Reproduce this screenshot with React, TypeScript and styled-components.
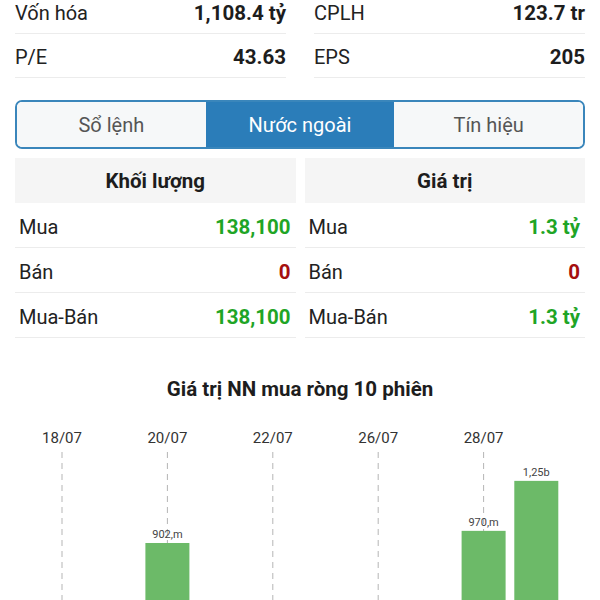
import React from 'react';
import styled, { createGlobalStyle } from 'styled-components';

const GlobalStyle = createGlobalStyle`
  html, body {
    margin: 0;
    padding: 0;
    background: #fff;
    overflow: hidden;
  }
  body {
    font-family: Roboto, "Noto Sans", "Liberation Sans", sans-serif;
    color: #222;
  }
`;

const Page = styled.div`
  padding: 0 15px;
  margin-top: -10px;
  width: 600px;
  box-sizing: border-box;
`;

const InfoGrid = styled.div`
  display: grid;
  grid-template-columns: 1fr 1fr;
  column-gap: 28px;
`;

const InfoRow = styled.div`
  display: flex;
  justify-content: space-between;
  align-items: center;
  height: 44px;
  padding-top: 2px;
  box-sizing: border-box;
  border-bottom: 1px solid #ececec;
  font-size: 20px;
`;

const Value = styled.span<{ $tone?: 'up' | 'down' }>`
  font-weight: 700;
  font-size: 20.5px;
  color: ${(p) => (p.$tone === 'up' ? '#1fa526' : p.$tone === 'down' ? '#a50f0f' : '#1d1d1d')};
`;

const Tabs = styled.div`
  display: grid;
  grid-template-columns: repeat(3, 1fr);
  margin-top: 22px;
  height: 49px;
  border: 2px solid #3a86bb;
  border-radius: 7px;
  overflow: hidden;
  box-sizing: border-box;
`;

const Tab = styled.div<{ $active?: boolean }>`
  display: flex;
  align-items: center;
  justify-content: center;
  font-size: 20px;
  background: ${(p) => (p.$active ? '#2b7db9' : '#f6f8f9')};
  color: ${(p) => (p.$active ? '#fff' : '#555')};
`;

const Tables = styled.div`
  display: grid;
  grid-template-columns: 1fr 1fr;
  column-gap: 9px;
  margin-top: 9px;
`;

const TableHead = styled.div`
  height: 45px;
  display: flex;
  align-items: center;
  justify-content: center;
  background: #f5f5f5;
  font-size: 20.5px;
  font-weight: 700;
  color: #1d1d1d;
`;

const TableRow = styled.div`
  display: flex;
  justify-content: space-between;
  align-items: center;
  height: 45px;
  box-sizing: border-box;
  padding: 3px 5px 0 4px;
  border-bottom: 1px solid #ececec;
  font-size: 20px;
`;

const ChartTitle = styled.div`
  margin-top: 39px;
  text-align: center;
  font-size: 20.5px;
  font-weight: 700;
  line-height: 24px;
  color: #1d1d1d;
`;

const ChartSvg = styled.svg`
  display: block;
  margin-top: 9px;
`;

type Row = { label: string; value: string; tone?: 'up' | 'down' };

const volume: Row[] = [
  { label: 'Mua', value: '138,100', tone: 'up' },
  { label: 'Bán', value: '0', tone: 'down' },
  { label: 'Mua-Bán', value: '138,100', tone: 'up' },
];

const amount: Row[] = [
  { label: 'Mua', value: '1.3 tỷ', tone: 'up' },
  { label: 'Bán', value: '0', tone: 'down' },
  { label: 'Mua-Bán', value: '1.3 tỷ', tone: 'up' },
];

// net foreign buy, in millions; 0 = no bar shown
const sessions: { date: string; value: number; label?: string }[] = [
  { date: '18/07', value: 0 },
  { date: '19/07', value: 0 },
  { date: '20/07', value: 902, label: '902,m' },
  { date: '21/07', value: 0 },
  { date: '22/07', value: 0 },
  { date: '25/07', value: 0 },
  { date: '26/07', value: 0 },
  { date: '27/07', value: 0 },
  { date: '28/07', value: 970, label: '970,m' },
  { date: '29/07', value: 1250, label: '1,25b' },
];

const SLOT = 52.7;
const FIRST = 47;
const BASE = 294;
const SCALE = 0.1785;

const Chart: React.FC = () => (
  <ChartSvg width={570} height={200} viewBox="0 0 570 200">
    {sessions.map((s, i) =>
      i % 2 === 0 ? (
        <g key={s.date}>
          <text
            x={FIRST + i * SLOT}
            y={33}
            textAnchor="middle"
            fontSize={15}
            fill="#333"
            fontFamily="Roboto, sans-serif"
          >
            {s.date}
          </text>
          <line
            x1={FIRST + i * SLOT}
            x2={FIRST + i * SLOT}
            y1={42}
            y2={200}
            stroke="#b5b5b5"
            strokeWidth={1}
            strokeDasharray="6 5"
          />
        </g>
      ) : null
    )}
    {sessions.map((s, i) => {
      if (!s.value) return null;
      const h = s.value * SCALE;
      const cx = FIRST + i * SLOT;
      return (
        <g key={s.date + 'b'}>
          <rect x={cx - 22} y={BASE - h} width={44} height={h} fill="#6cba68" />
          <text
            x={cx}
            y={BASE - h - 5}
            textAnchor="middle"
            fontSize={11}
            fill="#444"
            fontFamily="Roboto, sans-serif"
          >
            {s.label}
          </text>
        </g>
      );
    })}
  </ChartSvg>
);

const Column: React.FC<{ title: string; rows: Row[] }> = ({ title, rows }) => (
  <div>
    <TableHead>{title}</TableHead>
    {rows.map((r) => (
      <TableRow key={r.label}>
        <span>{r.label}</span>
        <Value $tone={r.tone}>{r.value}</Value>
      </TableRow>
    ))}
  </div>
);

export default function App() {
  return (
    <>
      <GlobalStyle />
      <Page>
        <InfoGrid>
          <InfoRow>
            <span>Vốn hóa</span>
            <Value>1,108.4 tỷ</Value>
          </InfoRow>
          <InfoRow>
            <span>CPLH</span>
            <Value>123.7 tr</Value>
          </InfoRow>
          <InfoRow>
            <span>P/E</span>
            <Value>43.63</Value>
          </InfoRow>
          <InfoRow>
            <span>EPS</span>
            <Value>205</Value>
          </InfoRow>
        </InfoGrid>

        <Tabs>
          <Tab>Sổ lệnh</Tab>
          <Tab $active>Nước ngoài</Tab>
          <Tab>Tín hiệu</Tab>
        </Tabs>

        <Tables>
          <Column title="Khối lượng" rows={volume} />
          <Column title="Giá trị" rows={amount} />
        </Tables>

        <ChartTitle>Giá trị NN mua ròng 10 phiên</ChartTitle>
        <Chart />
      </Page>
    </>
  );
}
